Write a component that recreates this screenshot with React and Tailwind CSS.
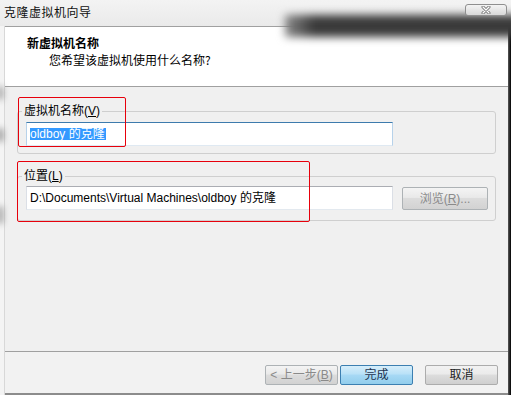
import React from 'react';

const Button = ({ children, primary, disabled, className = '' }) => {
  let look = 'border-[#acacac] bg-[linear-gradient(#f2f2f2,#ebebeb_45%,#dddddd_50%,#cfcfcf)] text-[#1e1e1e]';
  if (primary) look = 'border-[#3c7fb1] bg-[linear-gradient(#d6eefb,#b9e1f7_45%,#a7d9f5_50%,#92cdec)] text-[#1e3450]';
  if (disabled) look = 'border-[#adb2b5] bg-[linear-gradient(#f4f4f4,#e9e9e9_45%,#dcdcdc_50%,#d2d2d2)] text-[#8a8a8a]';
  return (
    <div
      className={`flex h-[20px] w-[73px] items-center justify-center rounded-[2px] border leading-[16px] ${look} ${className}`}
    >
      {children}
    </div>
  );
};

export default function App() {
  return (
    <div className="relative flex h-[395px] w-[511px] flex-col overflow-hidden bg-[#f0f0f0] font-['Liberation_Sans','Noto_Sans_CJK_SC',sans-serif] text-[12px] text-black">
      {/* title bar */}
      <div className="relative flex h-[26px] shrink-0 items-start bg-[linear-gradient(#f3f3f3,#eaeaea)]">
        <div className="absolute left-[285px] right-[-20px] top-[15px] h-[22px] bg-[linear-gradient(90deg,#8a8a8a,#3a3a3a_12%,#3a3a3a)] blur-[4px]" />
        <div className="relative ml-[4px] mt-[3px] font-['Noto_Sans_CJK_SC',sans-serif] leading-[18px] tracking-[0.5px] text-[#101010]">
          克隆虚拟机向导
        </div>
        <div className="relative ml-auto mr-[4px] mt-[4px] flex h-[12px] w-[42px] items-center justify-center rounded-[3px] border border-[#8f8f8f] bg-[linear-gradient(#f4f4f4,#d8d8d8)]">
          <svg width="10" height="8" viewBox="0 0 10 8">
            <path d="M2 1 L8 7 M8 1 L2 7" stroke="#6e6e6e" strokeWidth="3" strokeLinecap="round" />
            <path d="M2 1 L8 7 M8 1 L2 7" stroke="#ffffff" strokeWidth="1.4" strokeLinecap="round" />
          </svg>
        </div>
      </div>

      <div className="flex flex-1">
        {/* left frame */}
        <div className="relative w-[5px] shrink-0 border-r border-[#d8d8d8] bg-[#f4f4f4]">
          <div className="absolute left-[-2px] top-[60px] h-[14px] w-[5px] rounded-full bg-[#9a9a9a] blur-[3px]" />
          <div className="absolute left-[-2px] top-[102px] h-[14px] w-[5px] rounded-full bg-[#8a8a8a] blur-[3px]" />
          <div className="absolute left-[-2px] top-[180px] h-[18px] w-[5px] rounded-full bg-[#999] blur-[3px]" />
        </div>

        {/* dialog content */}
        <div className="flex flex-1 flex-col border-b-2 border-t border-b-[#8c8c8c] border-t-[#a0a0a0]">
          <div className="h-[60px] shrink-0 border-b border-[#a0a0a0] bg-white pl-[22px] pt-[8px] font-['Noto_Sans_CJK_SC',sans-serif]">
            <div className="font-bold leading-[16px]">新虚拟机名称</div>
            <div className="pl-[22px] leading-[17px]">您希望该虚拟机使用什么名称?</div>
          </div>

          <div className="flex-1 px-[12px] pt-[16px]">
            <fieldset className="rounded-[3px] border border-[#cfcfcf] pb-[7px] pl-[8px] pr-[7px]">
              <legend className="-ml-[4px] px-[2px] leading-[16px]">
                虚拟机名称(<u>V</u>)
              </legend>
              <div className="mt-[3px] flex h-[24px] w-[367px] items-center border border-[#b7d2ea] border-b-[#dfe9f2] border-t-[#3d7bad] bg-white pl-[3px]">
                <span className="bg-[#3399ff] pr-[1px] leading-[12px] text-white">oldboy 的克隆</span>
              </div>
            </fieldset>

            <fieldset className="mt-[14px] rounded-[3px] border border-[#cfcfcf] pb-[10px] pl-[8px] pr-[7px]">
              <legend className="-ml-[4px] px-[2px] leading-[16px]">
                位置(<u>L</u>)
              </legend>
              <div className="mt-[2px] flex items-center">
                <div className="flex h-[24px] w-[367px] items-center border border-[#dbdfe6] border-b-[#e3e9ef] border-t-[#abadb3] bg-white pl-[3px]">
                  D:\Documents\Virtual Machines\oldboy 的克隆
                </div>
                <Button disabled className="ml-auto mt-[1px] h-[23px] w-[86px]">
                  浏览(<u>R</u>)...
                </Button>
              </div>
            </fieldset>
          </div>

          <div className="flex h-[42px] shrink-0 border-t border-[#a0a0a0] bg-[#f2f2f2] pr-[10px] pt-[13px]">
            <div className="ml-auto flex items-start">
              <Button disabled>&lt; 上一步(<u>B</u>)</Button>
              <Button primary className="ml-[2px]">完成</Button>
              <Button className="ml-[12px]">取消</Button>
            </div>
          </div>
        </div>

        {/* right shadow edge */}
        <div className="w-[3px] shrink-0 bg-[linear-gradient(90deg,#5a5a5a,#000)]" />
      </div>

      {/* red annotation boxes */}
      <div className="absolute left-[18px] top-[97px] h-[50px] w-[108px] rounded-[2px] border border-solid border-red-600" />
      <div className="absolute left-[17px] top-[161px] h-[61px] w-[293px] rounded-[2px] border border-solid border-red-600" />
    </div>
  );
}
